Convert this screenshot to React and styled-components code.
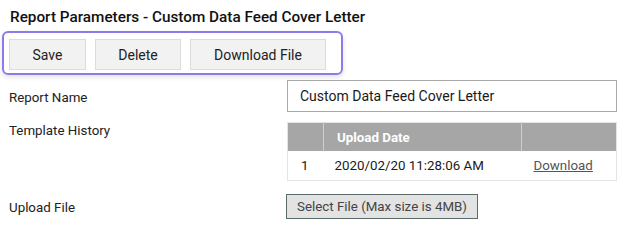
import React from 'react';
import styled, { createGlobalStyle } from 'styled-components';

const GlobalStyle = createGlobalStyle`
    body {
        margin: 0;
        background: #fff;
        font-family: Roboto, 'Liberation Sans', sans-serif;
        color: #222;
    }
`;

const Page = styled.div`
    width: 636px;
    padding: 8px 0 0 0;
`;

const Title = styled.h1`
    margin: 0 0 0 10px;
    font-size: 15.3px;
    font-weight: 500;
    line-height: 18px;
    color: #111;
`;

const Toolbar = styled.div`
    display: flex;
    gap: 9px;
    width: 318px;
    margin: 5px 0 0 2px;
    padding: 6px 14px 3px 5px;
    border: 2px solid #8d7be8;
    border-radius: 6px;
    box-shadow: 0 2px 5px rgba(0, 0, 0, 0.12);
`;

const Button = styled.button`
    width: ${p => p.w}px;
    height: 31px;
    background: #f2f2f2;
    border: 1px solid #dcdcdc;
    font-family: Roboto, 'Liberation Sans', sans-serif;
    font-size: 14px;
    color: #222;
    padding: 0;
`;

const Form = styled.div`
    display: grid;
    grid-template-columns: 278px 330px;
    grid-template-rows: 32px 57px 40px;
    margin: 5px 0 0 9px;
    row-gap: 10px;
    align-items: start;
`;

const Label = styled.div`
    font-size: 13.33px;
    line-height: 16px;
    color: #222;
    padding-top: ${p => p.top || 0}px;
`;

const Input = styled.div`
    height: 32px;
    box-sizing: border-box;
    border: 1px solid #a9a9a9;
    padding: 0 12px;
    display: flex;
    align-items: center;
    font-size: 14px;
    color: #1a1a1a;
`;

const Table = styled.table`
    width: 330px;
    table-layout: fixed;
    border-collapse: collapse;
    border: 1px solid #e4e4e4;
    font-size: 13.33px;
`;

const Th = styled.th`
    background: #a6a6a6;
    color: #fff;
    font-weight: 700;
    text-align: left;
    height: 28px;
    padding: 0 0 0 13px;
    border-left: 1px solid #cfcfcf;
    &:first-child { border-left: none; }
`;

const Td = styled.td`
    height: 29px;
    padding: 0 0 0 ${p => p.pl || 12}px;
    color: #1a1a1a;
`;

const Link = styled.a`
    color: #555;
    text-decoration: underline;
`;

const FileButton = styled.button`
    width: 192px;
    height: 25px;
    margin-top: 5px;
    margin-left: -1px;
    background: #e3e3e3;
    border: 1px solid #5c6b6b;
    font-family: Roboto, 'Liberation Sans', sans-serif;
    font-size: 13.33px;
    color: #444;
    padding: 0;
`;

export default function App() {
    return (
        <Page>
            <GlobalStyle />
            <Title>Report Parameters - Custom Data Feed Cover Letter</Title>
            <Toolbar>
                <Button w={77}>Save</Button>
                <Button w={86}>Delete</Button>
                <Button w={136}>Download File</Button>
            </Toolbar>
            <Form>
                <Label top={10}>Report Name</Label>
                <Input>Custom Data Feed Cover Letter</Input>
                <Label top={1}>Template History</Label>
                <Table>
                    <colgroup>
                        <col style={{ width: 36 }} />
                        <col style={{ width: 198 }} />
                        <col />
                    </colgroup>
                    <thead>
                        <tr>
                            <Th></Th>
                            <Th>Upload Date</Th>
                            <Th></Th>
                        </tr>
                    </thead>
                    <tbody>
                        <tr>
                            <Td pl={13}>1</Td>
                            <Td pl={11}>2020/02/20 11:28:06 AM</Td>
                            <Td pl={12}><Link href="#">Download</Link></Td>
                        </tr>
                    </tbody>
                </Table>
                <Label top={11}>Upload File</Label>
                <div>
                    <FileButton>Select File (Max size is 4MB)</FileButton>
                </div>
            </Form>
        </Page>
    );
}
